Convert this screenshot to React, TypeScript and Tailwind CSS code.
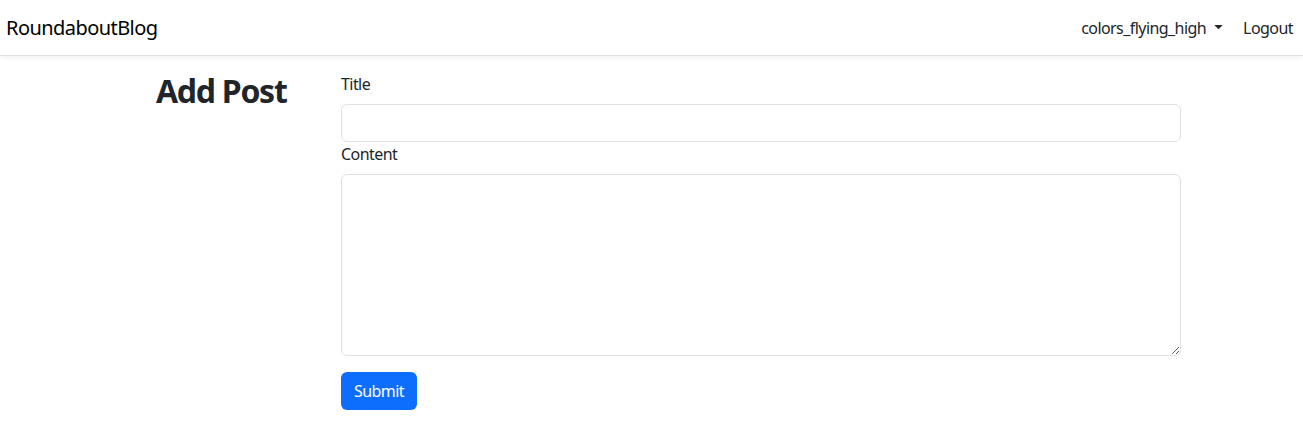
import React from "react";

export default function App() {
  return (
    <div className="min-h-screen bg-white text-[#212529] tracking-[-0.035em]">
      <nav className="flex h-[56px] items-center justify-between border-b border-[#dee2e6] bg-white pl-[6px] pr-[10px] shadow-[0_2px_6px_rgba(0,0,0,0.06)] font-['Noto_Sans',sans-serif]">
        <a className="text-[20px] text-black">RoundaboutBlog</a>
        <div className="flex items-center text-[16px] text-[#212529]">
          <span className="flex items-center">
            colors_flying_high
            <svg width="9" height="5" viewBox="0 0 10 6" className="ml-[8px]">
              <path d="M0 0 L10 0 L5 5 Z" fill="#212529" />
            </svg>
          </span>
          <span className="ml-[20px]">Logout</span>
        </div>
      </nav>
      <main className="flex pt-[16px] font-['Noto_Sans',sans-serif]">
        <div className="w-[341px] shrink-0 pl-[156px]">
          <h1 className="text-[32px] font-bold leading-[1.2] tracking-[-0.04em] text-[#212529]">Add Post</h1>
        </div>
        <form className="flex w-[840px] flex-col" onSubmit={(e) => e.preventDefault()}>
          <label className="mb-[8px] text-[16px] leading-[24px]">Title</label>
          <input className="h-[38px] rounded-[6px] border border-[#dee2e6] px-[12px] outline-none" />
          <label className="mb-[8px] text-[16px] leading-[24px]">Content</label>
          <textarea className="h-[182px] rounded-[6px] border border-[#dee2e6] px-[12px] py-[6px] outline-none" />
          <div className="mt-[16px]">
            <button className="h-[38px] w-[76px] rounded-[6px] bg-[#0d6efd] text-[16px] text-white">Submit</button>
          </div>
        </form>
      </main>
    </div>
  );
}
